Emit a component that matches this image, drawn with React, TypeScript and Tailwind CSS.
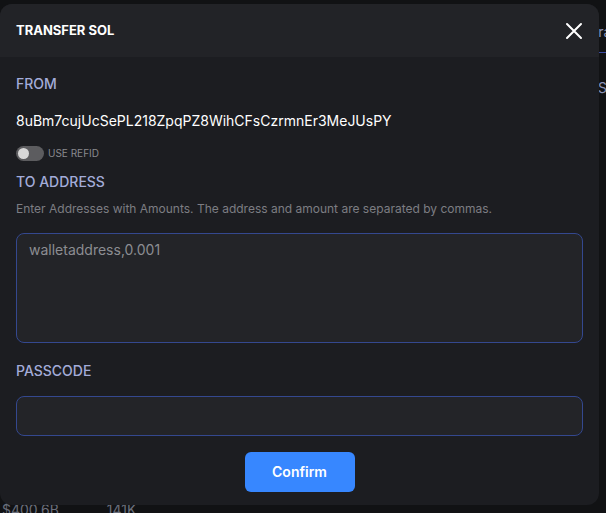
export default function App() {
  return (
    <div className="relative w-[606px] h-[513px] overflow-hidden bg-[#111214] font-['Inter','Roboto',sans-serif]">
      {/* page behind the modal */}
      <div className="absolute inset-0 text-[#8b93b8]">
        <div className="absolute left-[590px] top-[22px] text-sm">Transfer</div>
        <div className="absolute left-[590px] top-[52px] w-[40px] h-px bg-[#3b4aa0]" />
        <div className="absolute left-[598px] top-[78px] text-sm">SOL</div>
        <div className="absolute left-[2px] top-[500px] flex gap-[48px] text-sm text-[#6b6f7c]">
          <span>$400.6B</span>
          <span>141K</span>
        </div>
      </div>

      {/* modal */}
      <div className="absolute left-0 top-[4px] w-[599px] h-[501px] rounded-xl bg-[#1c1d21] overflow-hidden flex flex-col">
        <header className="h-[53px] shrink-0 bg-[#222327] flex items-center justify-between pl-4 pr-[16px]">
          <h1 className="text-[13px] font-bold text-white">TRANSFER SOL</h1>
          <button className="text-white">
            <svg width="18" height="18" viewBox="0 0 18 18" fill="none" stroke="currentColor" strokeWidth="2" strokeLinecap="round">
              <path d="M2 2L16 16M16 2L2 16" />
            </svg>
          </button>
        </header>

        <main className="px-4 flex flex-col">
          <div className="mt-[17px] text-sm font-medium text-[#a3acd9]">FROM</div>
          <div className="mt-[17px] text-sm text-white">8uBm7cujUcSePL218ZpqPZ8WihCFsCzrmnEr3MeJUsPY</div>

          <div className="mt-[15px] flex items-center gap-[4px]">
            <div className="w-[28px] h-[15px] rounded-full bg-[#5c5c5f] flex items-center px-[2px]">
              <div className="w-[11px] h-[11px] rounded-full bg-[#d8d8d8]" />
            </div>
            <span className="text-[10px] text-[#8a8a8e]">USE REFID</span>
          </div>

          <div className="mt-[11px] text-sm font-medium text-[#a3acd9]">TO ADDRESS</div>
          <div className="mt-[9px] text-xs text-[#7c7d83]">
            Enter Addresses with Amounts. The address and amount are separated by commas.
          </div>

          <textarea
            className="mt-[16px] h-[110px] w-full resize-none rounded-lg border border-[#34488f] bg-[#232428] px-3 py-[6px] text-sm text-white placeholder:text-[#8c8d92] outline-none"
            placeholder="walletaddress,0.001"
          />

          <div className="mt-[18px] text-sm font-medium text-[#a3acd9]">PASSCODE</div>
          <input
            type="password"
            className="mt-[15px] h-[40px] w-full rounded-lg border border-[#34488f] bg-[#232428] px-3 text-sm text-white outline-none"
          />

          <div className="mt-[16px] flex justify-center">
            <button className="w-[110px] h-[40px] rounded-md bg-[#3787ff] text-sm font-semibold text-white">
              Confirm
            </button>
          </div>
        </main>
      </div>
    </div>
  );
}
